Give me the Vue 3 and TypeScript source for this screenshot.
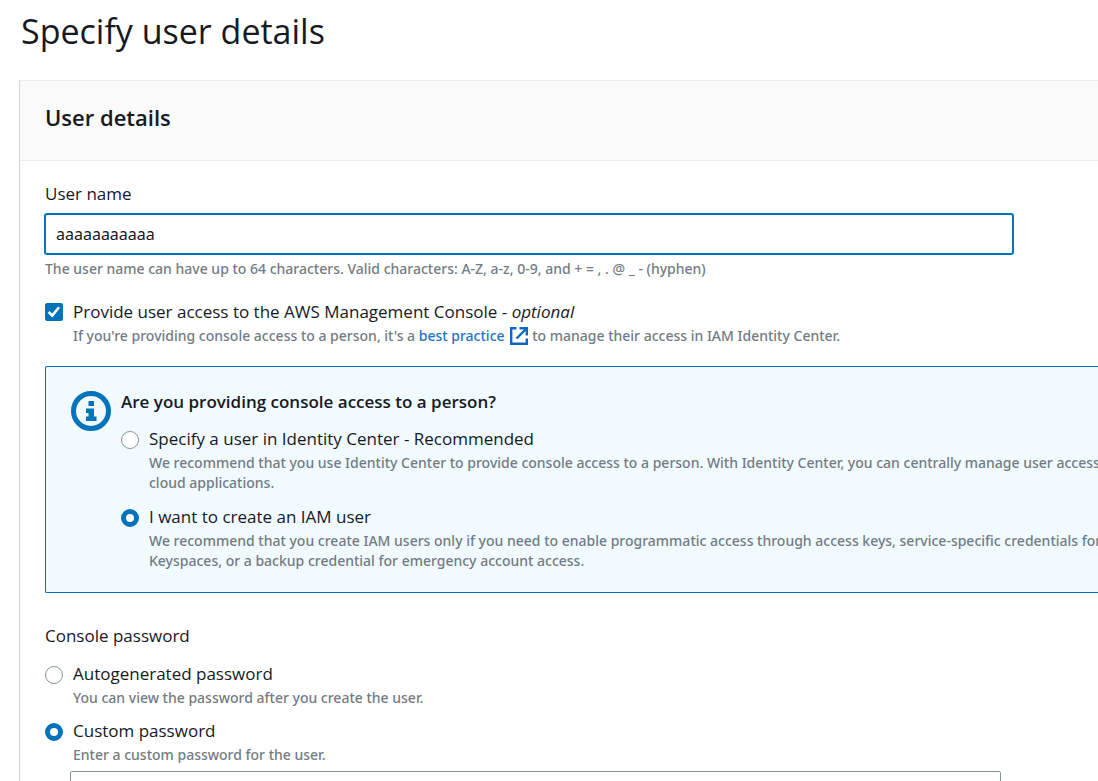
<script setup lang="ts">
import { ref } from 'vue'

const userName = ref<string>('aaaaaaaaaaa')
const consoleAccess = ref<boolean>(true)
const userType = ref<'identity' | 'iam'>('iam')
const passwordType = ref<'auto' | 'custom'>('custom')
const customPassword = ref<string>('')
</script>

<template>
  <main class="page">
    <h1 class="title">Specify user details</h1>

    <section class="card">
      <header class="card-header">
        <h2>User details</h2>
      </header>

      <div class="card-body">
        <div class="field">
          <label class="field-label" for="user-name">User name</label>
          <input id="user-name" v-model="userName" class="text-input focused" type="text" />
          <p class="hint">The user name can have up to 64 characters. Valid characters: A-Z, a-z, 0-9, and + = , . @ _ - (hyphen)</p>
        </div>

        <div class="option console-option">
          <span class="control">
            <input id="console-access" v-model="consoleAccess" class="checkbox" type="checkbox" />
            <svg v-if="consoleAccess" class="tick" viewBox="0 0 18 18" aria-hidden="true">
              <path d="M3.500 9l3.800 3.500L14 4.200" fill="none" stroke="#fff" stroke-width="2.600" />
            </svg>
          </span>
          <div>
            <label class="option-label" for="console-access">Provide user access to the AWS Management Console - <em>optional</em></label>
            <p class="hint">
              If you're providing console access to a person, it's a
              <a href="#">best practice<svg class="external" viewBox="0 0 18 18" aria-hidden="true">
                <path d="M6.5 1.2H1.2v15.6h15.6v-5.3M9.5 1.2h7.3v7.3M16 2L6.5 11.5" fill="none" stroke="currentColor" stroke-width="2.4" />
              </svg></a>
              to manage their access in IAM Identity Center.
            </p>
          </div>
        </div>

        <div class="callout">
          <svg class="info" viewBox="0 0 40 40" aria-hidden="true">
            <circle cx="20" cy="20" r="17.5" fill="none" stroke="currentColor" stroke-width="5" />
            <path d="M17.5 10h5.500v5h-5.500zM15 17.500h8v8h2.500v4.500H15v-4.500h2.500v-3.500H15z" fill="currentColor" />
          </svg>
          <div class="callout-content" role="radiogroup" aria-labelledby="person-question">
            <h3 id="person-question">Are you providing console access to a person?</h3>
            <div class="option">
              <input id="type-identity" v-model="userType" class="radio" type="radio" name="user-type" value="identity" />
              <div>
                <label class="option-label" for="type-identity">Specify a user in Identity Center - Recommended</label>
                <p class="hint">
                  We recommend that you use Identity Center to provide console access to a person. With Identity Center, you can centrally manage user access to their AWS accounts and<br />cloud applications.
                </p>
              </div>
            </div>
            <div class="option">
              <input id="type-iam" v-model="userType" class="radio" type="radio" name="user-type" value="iam" />
              <div>
                <label class="option-label" for="type-iam">I want to create an IAM user</label>
                <p class="hint">
                  We recommend that you create IAM users only if you need to enable programmatic access through access keys, service-specific credentials for AWS CodeCommit or Amazon<br />Keyspaces, or a backup credential for emergency account access.
                </p>
              </div>
            </div>
          </div>
        </div>

        <fieldset class="password">
          <legend class="field-label">Console password</legend>
          <div class="option">
            <input id="pw-auto" v-model="passwordType" class="radio" type="radio" name="password-type" value="auto" />
            <div>
              <label class="option-label" for="pw-auto">Autogenerated password</label>
              <p class="hint">You can view the password after you create the user.</p>
            </div>
          </div>
          <div class="option">
            <input id="pw-custom" v-model="passwordType" class="radio" type="radio" name="password-type" value="custom" />
            <div>
              <label class="option-label" for="pw-custom">Custom password</label>
              <p class="hint">Enter a custom password for the user.</p>
            </div>
          </div>
          <input v-model="customPassword" class="text-input custom-input" type="password" aria-label="Custom password" />
        </fieldset>
      </div>
    </section>
  </main>
</template>

<style>
html {
  overflow: hidden;
}
body {
  margin: 0;
  background: #fff;
}
</style>

<style scoped>
* {
  box-sizing: border-box;
}
.page {
  height: 100vh;
  padding: 7px 0 0 19px;
  overflow: hidden;
  color: #16191f;
  font-family: "Open Sans", "Noto Sans", sans-serif;
  font-size: 16px;
  line-height: 24px;
  white-space: nowrap;
}
h1,
h2,
h3,
p {
  margin: 0;
}
.title {
  padding-left: 2px;
  font-size: 34px;
  font-weight: 400;
  line-height: 48px;
}
.card {
  margin-top: 25px;
  border-top: 1px solid #eaeded;
  border-left: 1px solid #d0d5d6;
}
.card-header {
  height: 80px;
  padding: 20px 25px;
  border-bottom: 1px solid #eaeded;
  background: #fafafa;
}
.card-header h2 {
  font-size: 22px;
  font-weight: 600;
  line-height: 32px;
}
.card-body {
  padding: 21px 0 0 25px;
}
.field {
  display: flex;
  flex-direction: column;
}
.field-label {
  padding: 0;
  font-size: 17px;
  line-height: 24px;
}
.text-input {
  width: calc(100% - 85px);
  height: 40px;
  padding: 0 10px;
  border: 1px solid #879596;
  border-radius: 2px;
  outline: none;
  background: #fff;
  color: #16191f;
  font-family: "Noto Sans", "Open Sans", sans-serif;
  font-size: 16px;
}
.focused {
  margin: 8px 0 5px;
  border-color: #0073bb;
  box-shadow: 0 0 0 1px #0073bb;
}
.hint {
  color: #737b83;
  font-family: "Noto Sans", "Open Sans", sans-serif;
  font-size: 14px;
  font-weight: 500;
  line-height: 20px;
}
.hint a {
  color: #1b74c5;
  text-decoration: none;
}
.external {
  width: 18px;
  height: 18px;
  margin: 0 1px 0 5px;
  color: #0f68be;
  vertical-align: -4px;
}
.option {
  display: flex;
  gap: 10px;
}
.option-label {
  display: block;
  font-size: 17px;
  line-height: 28px;
}
.console-option {
  margin-top: 19px;
}
.control {
  display: grid;
  flex: none;
  width: 18px;
  height: 18px;
  margin-top: 5px;
}
.control > * {
  grid-area: 1 / 1;
}
.checkbox {
  width: 18px;
  height: 18px;
  margin: 0;
  border: 1px solid #879596;
  border-radius: 2px;
  appearance: none;
}
.checkbox:checked {
  border-color: #0073bb;
  background: #0073bb;
}
.tick {
  width: 18px;
  height: 18px;
  pointer-events: none;
}
.radio {
  flex: none;
  width: 18px;
  height: 18px;
  margin: 6px 0 0;
  border: 1px solid #879596;
  border-radius: 50%;
  background: #fff;
  appearance: none;
}
.radio:checked {
  border: 5px solid #0073bb;
}
.callout {
  display: flex;
  gap: 10px;
  margin-top: 20px;
  padding: 21px 0 21px 25px;
  border: 1px solid #0073bb;
  border-right: 0;
  border-radius: 2px 0 0 2px;
  background: #f1faff;
}
.callout h3 {
  font-size: 17px;
  font-weight: 600;
  line-height: 28px;
}
.callout-content {
  display: flex;
  flex-direction: column;
  gap: 9px;
}
.callout-content .option + .option {
  margin-top: 1px;
}
.info {
  flex: none;
  width: 40px;
  height: 40px;
  margin-top: 3px;
  color: #0073bb;
}
.password {
  display: flex;
  flex-direction: column;
  gap: 9px;
  min-width: 0;
  margin: 31px 0 0;
  padding: 0;
  border: 0;
}
.password legend {
  margin-bottom: 12px;
}
.custom-input {
  width: calc(100% - 122px);
  margin: -3px 0 0 25px;
}
</style>
